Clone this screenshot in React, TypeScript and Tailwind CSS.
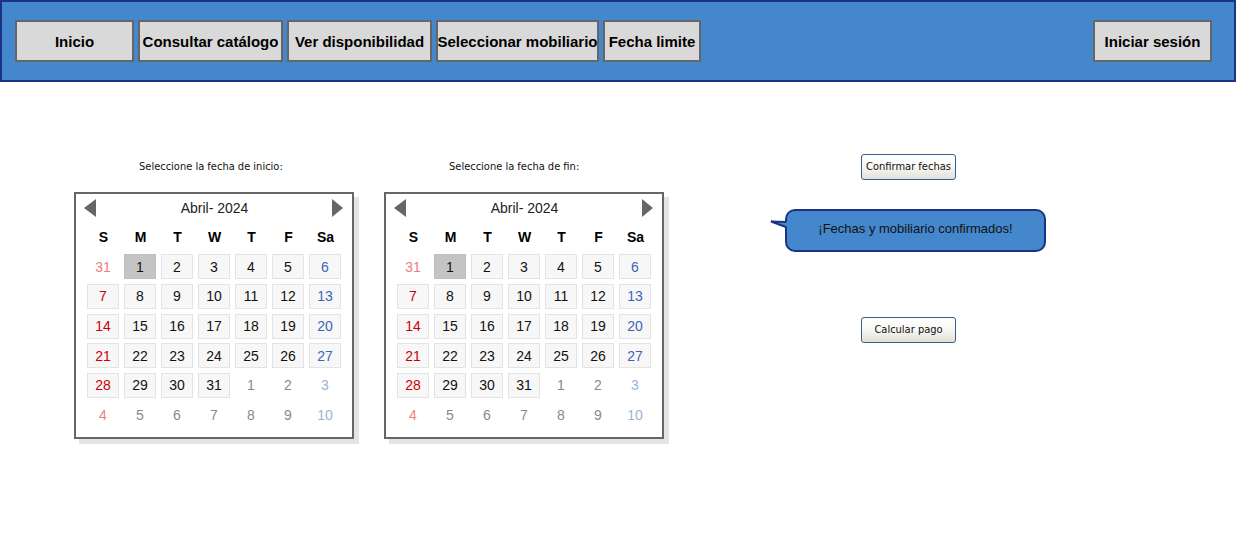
const NAV_ITEMS = [
  { label: 'Inicio', width: 'w-[119px]' },
  { label: 'Consultar catálogo', width: 'w-[145px]' },
  { label: 'Ver disponibilidad', width: 'w-[145px]' },
  { label: 'Seleccionar mobiliario', width: 'w-[163px]' },
  { label: 'Fecha limite', width: 'w-[98px]' },
];

const WEEKDAYS = ['S', 'M', 'T', 'W', 'T', 'F', 'Sa'];

// Six weeks: the last day of the previous month, days 1-31, then the next month.
const WEEKS = Array.from({ length: 6 }, (_, week) =>
  Array.from({ length: 7 }, (_, weekday) => {
    const n = week * 7 + weekday;
    if (n === 0) return { day: 31, current: false };
    return n <= 31 ? { day: n, current: true } : { day: n - 31, current: false };
  }),
);

function dayColor(weekday: number, current: boolean) {
  if (weekday === 0) return current ? 'text-[#cc0000]' : 'text-[#ea8080]';
  if (weekday === 6) return current ? 'text-[#3d64b8]' : 'text-[#9eb2dc]';
  return current ? 'text-[#111111]' : 'text-[#8a8a8a]';
}

function dayBox(day: number, current: boolean) {
  if (!current) return 'border-transparent';
  return day === 1 ? 'border-[#bdbdbd] bg-[#c4c4c4]' : 'border-[#e3e3e3] bg-[#f7f7f7]';
}

function NavButton({ label, width }: { label: string; width: string }) {
  return (
    <button
      type="button"
      className={`flex h-[42px] shrink-0 items-center justify-center border-2 border-[#666666] bg-[#d9d9d9] pt-[3px] text-[15px] font-bold whitespace-nowrap text-black ${width}`}
    >
      {label}
    </button>
  );
}

function Calendar({ title }: { title: string }) {
  return (
    <section className="w-[280px]">
      <h2 className="pl-[65px] font-['DejaVu_Sans_Condensed','Open_Sans',sans-serif] text-[11px] leading-4 text-[#111111]">{title}</h2>
      <div className="mt-[17px] border-2 border-[#666666] bg-white pr-[9px] pb-[7px] pl-2 shadow-[5px_5px_0_#e4e4e4]">
        <div className="flex h-7 items-center justify-between">
          <button type="button" aria-label="Mes anterior">
            <svg width="12" height="18" viewBox="0 0 12 18" className="block fill-[#666666]">
              <path d="M12 0V18L0 9Z" />
            </svg>
          </button>
          <span className="pl-px text-[14px] text-[#222222]">Abril- 2024</span>
          <button type="button" aria-label="Mes siguiente">
            <svg width="11" height="18" viewBox="0 0 11 18" className="block fill-[#666666]">
              <path d="M0 0V18L11 9Z" />
            </svg>
          </button>
        </div>
        <table className="h-[208px] w-full table-fixed border-collapse text-[14px] leading-4">
          <thead>
            <tr>
              {WEEKDAYS.map((name, i) => (
                <th key={i} scope="col" className="h-[30px] p-0 pl-[2px] text-center font-bold text-black">
                  {name}
                </th>
              ))}
            </tr>
          </thead>
          <tbody>
            {WEEKS.map((week, w) => (
              <tr key={w}>
                {week.map(({ day, current }, d) => (
                  <td key={d} className="p-0 pl-[3px]">
                    <button
                      type="button"
                      className={`flex h-[25px] w-8 items-center justify-center border ${dayBox(day, current)} ${dayColor(d, current)}`}
                    >
                      {day}
                    </button>
                  </td>
                ))}
              </tr>
            ))}
          </tbody>
        </table>
      </div>
    </section>
  );
}

function ActionButton({ label }: { label: string }) {
  return (
    <button
      type="button"
      className="block h-[26px] w-[95px] rounded-[3px] border border-[#33628f] bg-linear-to-b from-white via-[#f7f7f4] to-[#e2dfd6] font-['DejaVu_Sans_Condensed','Open_Sans',sans-serif] text-[11px] leading-4 whitespace-nowrap text-[#111111]"
    >
      {label}
    </button>
  );
}

export default function App() {
  return (
    <div className="min-h-screen bg-white font-['Liberation_Sans',Arial,sans-serif]">
      <header className="flex h-[82px] items-center justify-between border-2 border-[#1c3283] bg-[#4487cc] pr-[22px] pl-[13px]">
        <nav className="flex gap-1">
          {NAV_ITEMS.map((item) => (
            <NavButton key={item.label} {...item} />
          ))}
        </nav>
        <NavButton label="Iniciar sesión" width="w-[119px]" />
      </header>
      <main className="flex items-start pt-[77px] pl-[74px]">
        <div className="flex gap-[30px]">
          <Calendar title="Seleccione la fecha de inicio:" />
          <Calendar title="Seleccione la fecha de fin:" />
        </div>
        <div className="-mt-[5px] ml-[121px] flex w-[261px] flex-col items-start">
          <div className="pl-[76px]">
            <ActionButton label="Confirmar fechas" />
          </div>
          <div className="relative mt-[29px] flex h-[43px] w-full items-center justify-center rounded-[10px] border-2 border-[#1c3283] bg-[#4487cc] pb-[3px]">
            <svg width="20" height="12" viewBox="0 0 20 12" className="absolute top-[8px] -left-[18px]">
              <path d="M19 3L2 2.5L19 8Z" fill="#4487cc" />
              <path d="M17 3L2 2.5L17 8" fill="none" stroke="#1c3283" strokeWidth="2" />
            </svg>
            <p role="status" className="text-[13px] text-[#111111]">
              ¡Fechas y mobiliario confirmados!
            </p>
          </div>
          <div className="pt-[65px] pl-[76px]">
            <ActionButton label="Calcular pago" />
          </div>
        </div>
      </main>
    </div>
  );
}
